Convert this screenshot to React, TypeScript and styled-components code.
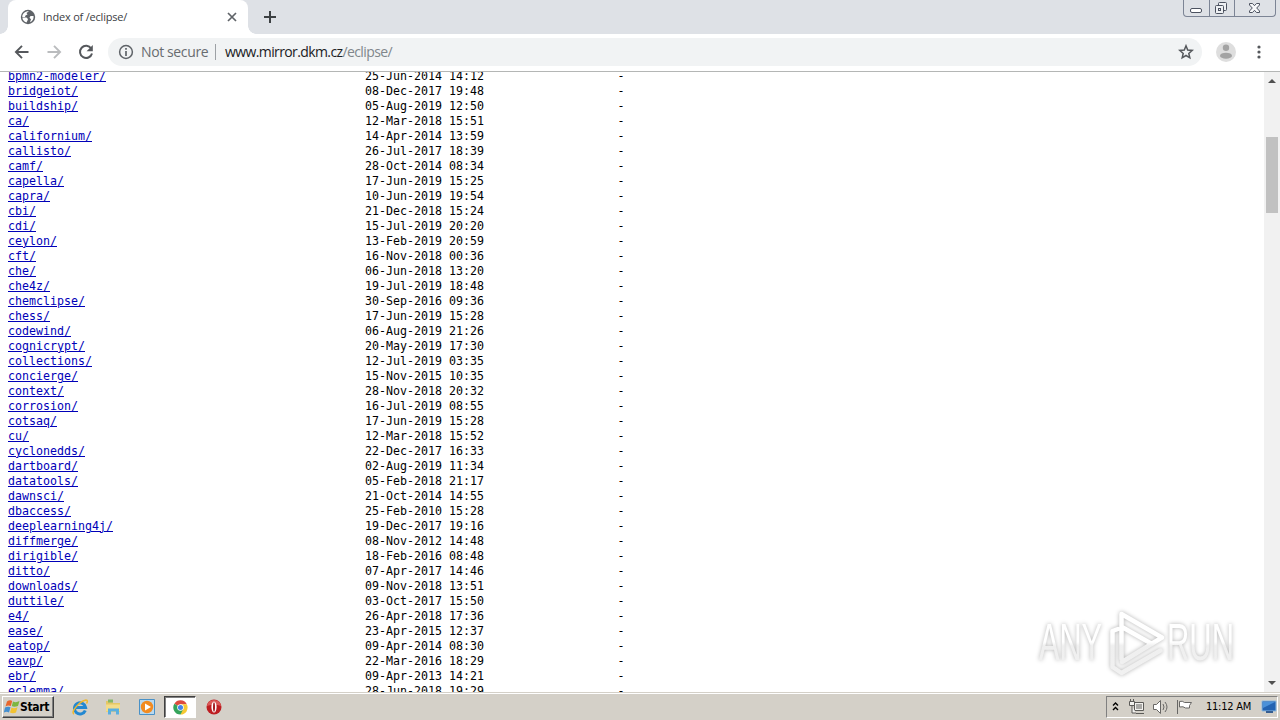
import React from "react";
import styled, { createGlobalStyle } from "styled-components";

const Global = createGlobalStyle`
  *{box-sizing:border-box}
  body{margin:0;overflow:hidden;background:#fff}
  svg{display:block;flex:none}
`;
const Screen = styled.div`width:1280px;height:720px;display:flex;flex-direction:column;overflow:hidden;background:#fff;font-family:"DejaVu Sans Condensed","Noto Sans",sans-serif;`;
const TabStrip = styled.div`height:34px;flex:none;background:#dee1e6;display:flex;align-items:flex-start;`;
const TabEdge = styled.div<{ $side: "left" | "right" }>`width:8px;height:34px;background:linear-gradient(#dee1e6,#dee1e6) 0 0/8px 26px no-repeat, radial-gradient(circle at ${p => p.$side === "left" ? "0 26px" : "8px 26px"}, #dee1e6 7.5px, #fff 8px);`;
const Tab = styled.div`width:240px;height:34px;background:#fff;border-radius:8px 8px 0 0;display:flex;align-items:center;padding:0 10px 0 12px;`;
const TabTitle = styled.span`margin-left:7px;flex:1;font:11px/16px "Open Sans",sans-serif;letter-spacing:-.2px;color:#3c4043;white-space:nowrap;`;
const NewTab = styled.div`padding:11px 0 0 8px;`;
const WindowButtons = styled.div`margin-left:auto;margin-right:4px;width:93px;height:17px;border:1px solid #7c8495;border-top:0;border-radius:0 0 4px 4px;display:flex;`;
const WindowButton = styled.div<{ $w: number }>`width:${p => p.$w}px;height:16px;display:flex;justify-content:center;&+&{border-left:1px solid #7c8495;}`;
const Toolbar = styled.div`height:38px;flex:none;display:flex;align-items:center;border-bottom:1px solid #b4b6b5;padding:0 13px 1px 14px;`;
const Omnibox = styled.div`width:1094px;height:28px;border-radius:14px;background:#f1f3f4;display:flex;align-items:center;padding:0 8px 0 10px;margin-left:14px;font:14px/20px "Open Sans",sans-serif;`;
const Security = styled.span`color:#686c70;width:74px;margin-left:7px;letter-spacing:-.38px;white-space:nowrap;`;
const Divider = styled.i`width:1px;height:16px;background:#9da1a5;margin-right:9px;`;
const Url = styled.span`color:#202124;flex:1;letter-spacing:-.61px;white-space:nowrap;& span{color:#80868b}`;
const Gap = styled.div<{ $w: number }>`width:${p => p.$w}px;flex:none;`;
const Viewport = styled.main`height:620px;flex:none;display:flex;overflow:hidden;`;
const Listing = styled.div`flex:1;margin-top:-3px;padding-left:8px;font:11.63px/15px "DejaVu Sans Mono",monospace;color:#000;`;
const Row = styled.div`height:15px;display:grid;grid-template-columns:357px 252.500px 20px;white-space:pre;`;
const Link = styled.a`color:#0000b8;text-decoration:underline;text-underline-offset:1px;text-decoration-thickness:1px;`;
const Scrollbar = styled.div`width:16px;background:#f1f1f1;display:flex;flex-direction:column;align-items:center;`;
const Thumb = styled.div`width:12px;height:76px;background:#c1c1c1;margin-top:51px;margin-bottom:auto;`;
const Watermark = styled.svg`position:absolute;left:1030px;top:602px;filter:drop-shadow(0 0 2px rgba(0,0,0,.3));`;
const Taskbar = styled.footer`height:28px;flex:none;background:#d4d0c8;border-top:1px solid #d4d0c8;box-shadow:inset 0 1px #fff;display:flex;align-items:center;padding:3px 2px 2px;`;
const Start = styled.div`width:52px;height:22px;background:#d4d0c8;border:1px solid;border-color:#fff #404040 #404040 #fff;box-shadow:inset -1px -1px #808080;display:flex;align-items:center;padding-left:1px;font:bold 12px/16px "DejaVu Sans Condensed",sans-serif;letter-spacing:-.35px;color:#000;`;
const Launch = styled.div<{ $active?: boolean }>`width:${p => p.$active ? 32 : 33.5}px;height:22px;display:flex;align-items:center;justify-content:center;border:1px solid transparent;${p => p.$active && "background:#fff;border-color:#404040 #fff #fff #404040;box-shadow:inset 1px 1px #808080;padding-left:2px;"}`;
const Tray = styled.div`margin-left:auto;width:172px;height:22px;border:1px solid;border-color:#808080 #fff #fff #808080;display:flex;align-items:center;padding-left:5px;`;
const Clock = styled.span`font:11px/16px "DejaVu Sans Condensed",sans-serif;letter-spacing:-.25px;white-space:nowrap;color:#000;width:47px;margin:0 8px 0 12px;`;

const entries = `bpmn2-modeler|25-Jun-2014 14:12
bridgeiot|08-Dec-2017 19:48
buildship|05-Aug-2019 12:50
ca|12-Mar-2018 15:51
californium|14-Apr-2014 13:59
callisto|26-Jul-2017 18:39
camf|28-Oct-2014 08:34
capella|17-Jun-2019 15:25
capra|10-Jun-2019 19:54
cbi|21-Dec-2018 15:24
cdi|15-Jul-2019 20:20
ceylon|13-Feb-2019 20:59
cft|16-Nov-2018 00:36
che|06-Jun-2018 13:20
che4z|19-Jul-2019 18:48
chemclipse|30-Sep-2016 09:36
chess|17-Jun-2019 15:28
codewind|06-Aug-2019 21:26
cognicrypt|20-May-2019 17:30
collections|12-Jul-2019 03:35
concierge|15-Nov-2015 10:35
context|28-Nov-2018 20:32
corrosion|16-Jul-2019 08:55
cotsaq|17-Jun-2019 15:28
cu|12-Mar-2018 15:52
cyclonedds|22-Dec-2017 16:33
dartboard|02-Aug-2019 11:34
datatools|05-Feb-2018 21:17
dawnsci|21-Oct-2014 14:55
dbaccess|25-Feb-2010 15:28
deeplearning4j|19-Dec-2017 19:16
diffmerge|08-Nov-2012 14:48
dirigible|18-Feb-2016 08:48
ditto|07-Apr-2017 14:46
downloads|09-Nov-2018 13:51
duttile|03-Oct-2017 15:50
e4|26-Apr-2018 17:36
ease|23-Apr-2015 12:37
eatop|09-Apr-2014 08:30
eavp|22-Mar-2016 18:29
ebr|09-Apr-2013 14:21
eclemma|28-Jun-2018 19:29`.split("\n").map(l => l.split("|"));

const Globe = () => <svg width="16" height="16" viewBox="0 0 16 16"><circle cx="8" cy="8" r="7.2" fill="#5f6368" /><path d="M9 2.200 6.500 4l1 1.500L5.500 6.500 5 8H2.300C2.200 4.500 5 2 9 2.200zM2.400 8.500H6.500l1.500 1.500-.5 1.500L6.500 13.400C4 12.800 2.400 10.800 2.400 8.500zM10.500 7h3c.5 3-1 5-3.500 6.200l1-3-1.500-1.500z" fill="#fff" /></svg>;
const Arrow = ({ back }: { back?: boolean }) => <svg width="16" height="16" viewBox="0 0 16 16" fill="none" stroke={back ? "#55585c" : "#babcbe"} strokeWidth="1.900"><path d={back ? "M14.500 8H2M8 1.800 1.900 8 8 14.200" : "M1.500 8h13M8 1.800 14.100 8 8 14.200"} /></svg>;

export default function App() {
  return <Screen>
    <Global />
    <TabStrip>
      <TabEdge $side="left" />
      <Tab>
        <Globe />
        <TabTitle>Index of /eclipse/</TabTitle>
        <svg width="12" height="12" viewBox="0 0 12 12" stroke="#5f6368" strokeWidth="1.700"><path d="M2 2l8 8M10 2l-8 8" /></svg>
      </Tab>
      <TabEdge $side="right" />
      <NewTab><svg width="12" height="12" viewBox="0 0 12 12" stroke="#3c4043" strokeWidth="2"><path d="M6 0v12M0 6h12" /></svg></NewTab>
      <WindowButtons>
        <WindowButton $w={25}><svg width="14" height="16" viewBox="0 0 14 16"><rect x="0.500" y="8.500" width="11" height="4" rx="1.500" fill="#fff" stroke="#4c5260" /></svg></WindowButton>
        <WindowButton $w={25}><svg width="14" height="16" viewBox="0 0 14 16" fill="#eef0f3" stroke="#4c5260"><rect x="3.500" y="2.500" width="8" height="8" rx="1" /><rect x="0.500" y="5.500" width="8" height="8" rx="1" /><rect x="3.500" y="8.500" width="2" height="2" /></svg></WindowButton>
        <WindowButton $w={41}><svg width="14" height="16" viewBox="0 0 14 16"><path d="M1.500 3.500h3L6.500 5.700l2-2.200h3v1.500L8.700 8l2.800 3v1.500h-3l-2-2.200-2 2.200h-3V11L4.300 8 1.500 5z" fill="#f7f8fa" stroke="#4c5260" /></svg></WindowButton>
      </WindowButtons>
    </TabStrip>
    <Toolbar>
      <Arrow back /><Gap $w={16} /><Arrow /><Gap $w={16} />
      <svg width="16" height="16" viewBox="0 0 16 16" fill="none"><path d="M13.200 4.500A6.100 6.100 0 1 0 14 9.500" stroke="#55585c" strokeWidth="2" /><path d="M14.800 1v6.200H8.600z" fill="#55585c" /></svg>
      <Omnibox>
        <svg width="16" height="16" viewBox="0 0 16 16" fill="none" stroke="#5f6368" strokeWidth="1.500"><circle cx="8" cy="8" r="6.400" /><path d="M8 7v5M8 4v1.700" strokeWidth="1.700" /></svg>
        <Security>Not secure</Security><Divider />
        <Url>www.mirror.dkm.cz<span>/eclipse/</span></Url>
        <svg width="16" height="16" viewBox="0 0 16 16"><path d="M8 1.800 9.700 6l4.500.4-3.400 3 1 4.400L8 11.500l-3.800 2.300 1-4.400-3.400-3L6.300 6z" fill="none" stroke="#55585c" strokeWidth="1.500" /></svg>
      </Omnibox>
      <Gap $w={13} />
      <svg width="22" height="22" viewBox="0 0 22 22"><circle cx="11" cy="11" r="10" fill="#dedede" /><circle cx="11" cy="6.700" r="3.200" fill="#a3a3a3" /><ellipse cx="11" cy="14.700" rx="6" ry="3" fill="#a3a3a3" /></svg>
      <Gap $w={18.5} />
      <svg width="6" height="16" viewBox="0 0 6 16" fill="#55585c"><circle cx="3" cy="3" r="1.600" /><circle cx="3" cy="8" r="1.600" /><circle cx="3" cy="13" r="1.600" /></svg>
    </Toolbar>
    <Viewport>
      <Listing>{entries.map(([name, date]) => <Row key={name}><span><Link>{name}/</Link></span><span>{date}</span><span>-</span></Row>)}</Listing>
      <Scrollbar>
        <svg width="16" height="14" viewBox="0 0 16 14"><path d="M4 11l4-4 4 4z" fill="#505050" /></svg>
        <Thumb />
        <svg width="16" height="16" viewBox="0 0 16 16"><path d="M4 5h8l-4 4z" fill="#505050" /></svg>
      </Scrollbar>
    </Viewport>
    <Watermark width="210" height="78" viewBox="0 0 210 78">
      <defs><linearGradient id="fade" gradientUnits="userSpaceOnUse" x1="0" y1="8" x2="0" y2="72"><stop offset=".5" stopColor="#fff" /><stop offset=".56" stopColor="#efefef" /><stop offset="1" stopColor="#f1f1f1" /></linearGradient></defs>
      <g fill="url(#fade)" fontFamily="Liberation Sans Narrow, Liberation Sans" fontSize="51"><text x="9" y="58" textLength="63" lengthAdjust="spacingAndGlyphs">ANY</text><text x="137" y="58" textLength="67" lengthAdjust="spacingAndGlyphs">RUN</text></g>
      <g fill="none" stroke="url(#fade)" strokeWidth="4.5" strokeLinejoin="round" strokeLinecap="round"><path d="M88 27 82.500 29V65l9 6 39-22.500M91.500 57V12L132 35.500 92 60M92 25l30 17" /></g>
    </Watermark>
    <Taskbar>
      <Start>
        <svg width="16" height="16" viewBox="0 0 16 16"><path d="M3 2.500q3-2 5.200-.5L6.800 7Q4 6 1.500 7.500z" fill="#e8662d" /><path d="M9 2.500q3 1.500 6.500-.5L14 7Q10 8.500 7.800 7z" fill="#7db640" /><path d="M1 8.500Q4 7 6.500 8.200L5 13.500Q2.500 12-.2 13.500z" fill="#448fd0" /><path d="M7.500 8.500Q10 10 13.500 8.200L12 13.500Q9 15 6 13.500z" fill="#f2c232" /></svg>Start
      </Start>
      <Gap $w={9} />
      <Launch><svg width="18" height="18" viewBox="0 0 18 18" fill="none"><path d="M14.300 12.500A5.600 5.600 0 1 1 14.600 9.500H5" stroke="#2388d1" strokeWidth="3" /><path d="M3 16C-1 14 9 3 15 2c2 0 1.500 2 .5 3.500" stroke="#efb82e" strokeWidth="1.500" /></svg></Launch>
      <Launch><svg width="18" height="18" viewBox="0 0 18 18"><path d="M2 3h6l1 2h7v9H2z" fill="#e5c765" /><path d="M4 1.500h5v3H4z" fill="#85b766" /><path d="M2 6.500h14v7H2z" fill="#f3dc8a" /><path d="M4 16.500v-6h11v6h-3v-3H7v3z" fill="#5aafe0" /></svg></Launch>
      <Launch><svg width="18" height="18" viewBox="0 0 18 18"><path d="M1.500 1.500h15v15h-15z" fill="#b9d9ef" stroke="#4991c7" /><circle cx="9" cy="9" r="6.200" fill="#f28b20" /><path d="M7 5.500v7l6-3.500z" fill="#fff" /></svg></Launch>
      <Launch $active><svg width="15" height="15" viewBox="0 0 16 16"><path d="M8 8 1.500 4A7.500 7.500 0 0 1 14.700 4.500H8z" fill="#dd4b3e" /><path d="M8 8V4.500h6.700A7.500 7.500 0 0 1 8 15.500z" fill="#f6c934" /><path d="M1.500 4A7.500 7.500 0 0 0 8 15.500L11 9.500 8 8z" fill="#35a45b" /><circle cx="8" cy="8" r="3.500" fill="#fff" /><circle cx="8" cy="8" r="2.700" fill="#4384e8" /></svg></Launch>
      <Gap $w={2} />
      <Launch><svg width="16" height="16" viewBox="0 0 16 16"><ellipse cx="8" cy="8" rx="7.500" ry="7.600" fill="#bd1e22" /><path d="M1 7a7 6 0 0 1 14 0Q8 4 1 7z" fill="#db5a58" /><ellipse cx="8" cy="8" rx="2.600" ry="5.500" fill="#fff" /><ellipse cx="8" cy="8" rx="1" ry="4.700" fill="#a51c20" /></svg></Launch>
      <Tray>
        <svg width="8" height="12" viewBox="0 0 8 12" fill="none" stroke="#000" strokeWidth="1.400"><path d="M1 4.500 3.500 2 6 4.500M1 9 3.500 6.500 6 9" /></svg>
        <Gap $w={8} />
        <svg width="18" height="18" viewBox="0 0 18 18" fill="#f3f2ef" stroke="#5c5b58"><path d="M6.500 4.500h9v8h-9zM8 15.500h8" /><path d="M8 6h6v5H8z" fill="#aaa9a6" stroke="none" /><path d="M1.500 3.500h5v4h-5zM2.500 1v2M5.500 1v2M4 8v7h4" /></svg>
        <Gap $w={6} />
        <svg width="18" height="18" viewBox="0 0 18 18" fill="#fff" stroke="#686765"><path d="M1.500 6.500h3l4-4v13l-4-4h-3z" /><path d="M11 6q2 3 0 6M13 4q4 5 0 10" fill="none" /></svg>
        <Gap $w={6} />
        <svg width="18" height="18" viewBox="0 0 18 18" fill="#fff" stroke="#686765"><path d="M1.500 2v14M3.500 3.500q3-1 5 1h7l-2 3 0 2.500h-4q-2-2-6-1z" /></svg>
        <Clock>11:12 AM</Clock>
        <svg width="16" height="16" viewBox="0 0 16 16"><path d="M1 2h14v10H1z" fill="#2363b2" stroke="#8ebae0" /><path d="M2 3h12L2 9z" fill="#4b91d9" /><path d="M5 12h7v2H5z" fill="#365e91" /></svg>
      </Tray>
    </Taskbar>
  </Screen>;
}
